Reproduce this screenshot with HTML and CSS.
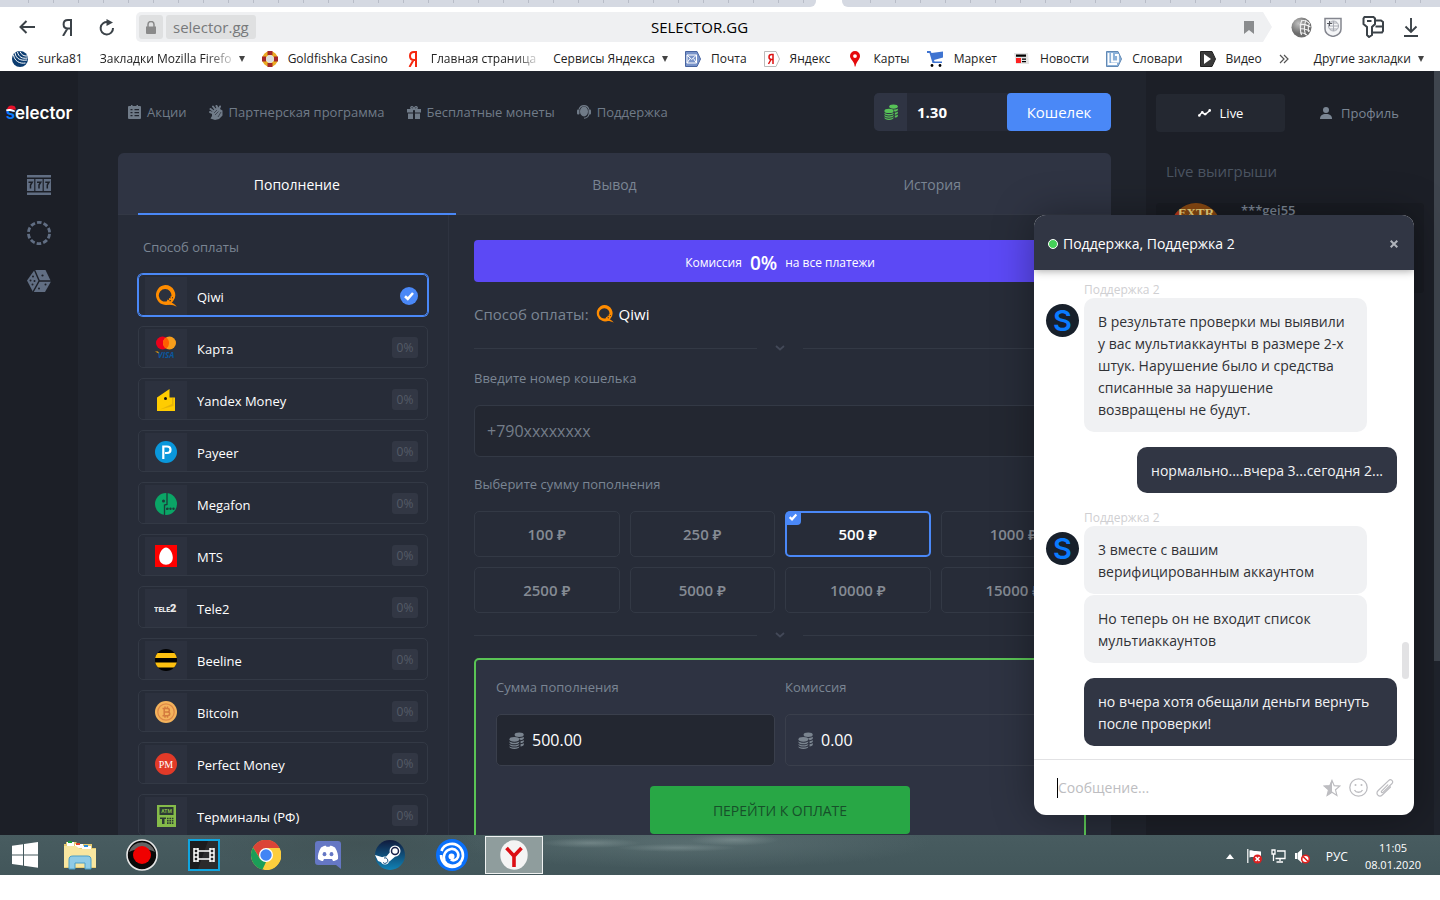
FILE: index.html
```html
<!DOCTYPE html>
<html lang="ru">
<head>
  <meta charset="utf-8">
  <title>SELECTOR.GG</title>
  <link rel="stylesheet" href="styles.css">
</head>
<body>
  <svg class="sprite" aria-hidden="true">
    <symbol id="i-coins" viewBox="0 0 14 16">
      <g fill="currentColor">
        <ellipse cx="9.5" cy="2.6" rx="4.3" ry="2.1"/>
        <path d="M10 5.6c2 0 3.300-.5 3.900-1.100v1.300c0 1-1.400 1.700-3.200 1.900-.3-.9-.7-1.400-1.500-2zM10.800 8.700c1.500-.2 2.500-.6 3.100-1.200v1.300c0 1-1.300 1.700-3.100 1.900zM10.800 11.600c1.500-.2 2.500-.6 3.100-1.200v1.300c0 1-1.300 1.700-3.100 1.900z"/>
        <ellipse cx="5" cy="6.900" rx="4.600" ry="2.200"/>
        <path d="M.4 8.700c.8.900 2.500 1.400 4.600 1.400s3.800-.5 4.600-1.400v.9c0 1.200-2 2-4.600 2s-4.600-.8-4.600-2zM.4 11.100c.8.900 2.500 1.400 4.600 1.400s3.800-.5 4.600-1.400v.6c0 1.200-2 2-4.600 2s-4.600-.8-4.600-2zM.4 13.300c.8.900 2.500 1.400 4.600 1.400s3.800-.5 4.600-1.400v.5c0 1.200-2 2.100-4.600 2.100S.4 15 .4 13.800z"/>
      </g>
    </symbol>
    <symbol id="i-qiwi" viewBox="0 0 22 22">
      <path fill="#ff8c00" fill-rule="evenodd" d="M10.200 0a10 10 0 0 1 8 16l-2 2.500a10 10 0 1 1-6-18.500zm0 4A6.300 6.300 0 1 0 12 16.300l.3-1.800 1.500.8.200-2.300 1.600.5-.2-2 1-.3A6.300 6.300 0 0 0 10.200 4z"/>
      <path fill="#ff8c00" d="M11 17.500c4-.8 8 .3 10.800 4.200-2.300-1.500-5.500-2.200-8.800-2z"/>
      <path fill="#272c38" d="M14.500 15h1.300v1.300h-1.300zM17 12.300h1v1h-1z"/>
    </symbol>
    <symbol id="i-check" viewBox="0 0 12 12">
      <path fill="none" stroke="#fff" stroke-width="2.600" d="M2 6.200l2.800 2.600L10 3"/>
    </symbol>
    <symbol id="i-down" viewBox="0 0 10 6">
      <path fill="none" stroke="currentColor" stroke-width="1.800" d="M1 1l4 3.500L9 1"/>
    </symbol>
  </svg>

  <div class="tabstrip">
    <div class="tabstrip-part tabstrip-left"></div>
    <div class="tabstrip-part tabstrip-right"></div>
  </div>

  <div class="toolbar">
    <button class="tool" aria-label="Назад"><svg width="16" height="14" viewBox="0 0 16 14"><path fill="none" stroke="#3b4248" stroke-width="2" d="M16 7H1.500M7.500 1l-6 6 6 6"/></svg></button>
    <button class="tool tool-ya" aria-label="Яндекс"><svg width="10" height="17" viewBox="0 0 10 17"><path fill="none" stroke="#3b4248" stroke-width="2" d="M9 17V1H6C3 1 1.600 2.700 1.600 5.200S3 9.500 6 9.500h3M5.500 9.500L1 17"/></svg></button>
    <button class="tool" aria-label="Обновить"><svg width="16" height="17" viewBox="0 0 16 17"><path fill="none" stroke="#3b4248" stroke-width="2" d="M9 3.200A6.200 6.200 0 1 0 14 9"/><path fill="#3b4248" d="M7.500 0l6.500 3.500-6.500 3.500z"/></svg></button>
    <div class="address">
      <div class="address-site">
        <button class="chip" aria-label="Сертификат"><svg width="10" height="13" viewBox="0 0 10 13"><path fill="#8a8a8a" d="M0 5.500h10V12a1 1 0 0 1-1 1H1a1 1 0 0 1-1-1z"/><path fill="none" stroke="#8a8a8a" stroke-width="1.500" d="M2 6V3.500a3 3 0 0 1 6 0V6"/></svg></button>
        <span class="chip chip-domain">selector.gg</span>
      </div>
      <span class="address-title">SELECTOR.GG</span>
      <button class="mark" aria-label="В закладки"><svg width="10" height="13" viewBox="0 0 10 13"><path fill="#8a8c8e" d="M0 0h10v13L5 9l-5 4z"/></svg></button>
    </div>
    <div class="extensions">
      <svg width="21" height="21" viewBox="0 0 21 21"><defs><radialGradient id="globe" cx=".35" cy=".3"><stop offset="0" stop-color="#c0c0c0"/><stop offset="1" stop-color="#6c6c6c"/></radialGradient></defs><circle cx="10.500" cy="10.500" r="10" fill="url(#globe)"/><g fill="none" stroke="#f3f3f3" stroke-width="1.100"><path d="M10 4c3-1 6 0 8 2M8.500 8c4-1.500 8 0 11 2M9 12c4-1 7 1 10 2M9 16c3-1 5 1 7 2M11 3c-2 4-2 10-.5 15M15 3c-2 5-2 10-.5 15M18.500 6c-1.500 3-1.500 7-1 9"/></g></svg>
      <svg width="18" height="20" viewBox="0 0 18 20"><path fill="#f4f5f7" stroke="#84868f" stroke-width="1.500" d="M1 1.500h16V12c0 4-4 6.500-8 7.500-4-1-8-3.500-8-7.500z"/><g fill="none" stroke="#a9acb4"><circle cx="9.500" cy="9" r="5"/><path d="M9.500 4v10M4.500 9h10M6 6h7M6 12h7"/></g><path stroke="#56585f" d="M3 6.500h5M5.500 4v5"/></svg>
      <svg width="22" height="22" viewBox="0 0 22 22"><g fill="none" stroke="#3b4248" stroke-width="2"><path d="M2.500 1h9L13 2.500V8l-3 3v8l-3 2-2-2v-8L1.500 8V2.500z"/><path d="M5 5h4.500M13.500 4.500H19L21 6v9l-1 1.500h-9M13.500 10.500H21"/></g></svg>
      <svg width="14" height="19" viewBox="0 0 14 19"><path fill="none" stroke="#3b4248" stroke-width="1.900" d="M7 0v13.500M1.500 8.500L7 14l5.500-5.500M0 18h14"/></svg>
    </div>
  </div>

  <nav class="bookmarks">
    <a href="#"><svg width="16" height="16" viewBox="0 0 16 16"><circle cx="8" cy="8" r="8" fill="#0b3c70"/><g fill="none" stroke="#fff" stroke-width="1"><path d="M3 2c1 6 6 8 12 7M5.500 1c1 5 5 7 10 6M8 .5c1 3 4 5 7.500 4.500M1.500 4c1 6 6 9 12 8"/></g></svg>surka81</a>
    <a href="#"><span class="fade">Закладки Mozilla Firefo</span><i class="caret"></i></a>
    <a href="#"><svg width="16" height="16" viewBox="0 0 16 16"><circle cx="8" cy="8" r="5.800" fill="#f5f5f5" stroke="#ecab22" stroke-width="4"/><g fill="#a3282b"><path d="M5.500 0h5v4h-5zM5.500 12h5v4h-5zM0 5.500h4v5H0zM12 5.500h4v5h-4z"/></g><circle cx="8" cy="8" r="3.800" fill="#ddd"/></svg>Goldfishka Casino</a>
    <a href="#"><svg width="16" height="16" viewBox="0 0 16 16"><path fill="none" stroke="#f5280f" stroke-width="2" d="M11 16V1H9C6.500 1 5 2.500 5 5s1.500 4 4 4h2M8.500 9L4.500 16"/></svg><span class="fade">Главная страница</span></a>
    <a href="#">Сервисы Яндекса<i class="caret"></i></a>
    <a href="#"><svg width="16" height="16" viewBox="0 0 16 16"><path fill="#7893c9" stroke="#4864a0" d="M.5.500H12L15.500 8 12 15.500H.5z"/><path fill="none" stroke="#fff" d="M2 4h9.500v8H2zM2 4l4.700 4.500L11.500 4M2 12l3-4.500M11.500 12l-3-4.500"/></svg>Почта</a>
    <a href="#"><svg width="16" height="16" viewBox="0 0 16 16"><path fill="#fff" stroke="#bbb" d="M.5.500H12L15.500 8 12 15.500H.5z"/><path fill="none" stroke="#d11" stroke-width="1.500" d="M9 13V3.500H7.500C5.800 3.500 5 4.500 5 6s.8 2.500 2.500 2.500H9M7 8.500L4.500 13"/></svg>Яндекс</a>
    <a href="#"><svg width="16" height="16" viewBox="0 0 16 16"><path fill="#e5090b" fill-rule="evenodd" d="M8 0a5 5 0 0 1 5 5c0 3.500-3.500 5-4.500 10.500h-.8C7.500 10 3 8.500 3 5a5 5 0 0 1 5-5zm0 3.200a1.900 1.900 0 1 0 0 3.800 1.900 1.900 0 0 0 0-3.800z"/></svg>Карты</a>
    <a href="#"><svg width="17" height="16" viewBox="0 0 17 16"><path fill="#3f74d1" d="M0 0h3.500L4.500 2 16 .500v6L7 9l.5 1.500H15V12H5.500L2.500 2H0z"/><circle cx="5" cy="14.500" r="1.400"/><circle cx="13" cy="14.500" r="1.400"/></svg>Маркет</a>
    <a href="#"><svg width="16" height="16" viewBox="0 0 16 16"><path fill="#e3e3e3" d="M0 2h14l1 11H2z"/><path d="M2 3.500h10v2.300H2zM8 7.500h4v1.300H8zM8 10h4v1.300H8z"/><path fill="#f22" d="M2 7h5v5H2z"/></svg>Новости</a>
    <a href="#"><svg width="16" height="16" viewBox="0 0 16 16"><path fill="#8cb1d8" stroke="#6189b5" d="M.5.500H12L15.500 8 12 15.500H.5z"/><path fill="none" stroke="#fff" stroke-width="1.800" d="M6 2v8.500h6V4H9M2.500 2v11H11"/></svg>Словари</a>
    <a href="#"><svg width="16" height="16" viewBox="0 0 16 16"><path fill="#3a3a3a" stroke="#222" d="M.5.500H12L15.500 8 12 15.500H.5z"/><path fill="#fff" d="M4 3l7 5-7 5z"/></svg>Видео</a>
    <a href="#" aria-label="Ещё"><svg width="10" height="10" viewBox="0 0 10 10"><path fill="none" stroke="#555" stroke-width="1.200" d="M1 1l4 4-4 4M5 1l4 4-4 4"/></svg></a>
    <a href="#" class="other">Другие закладки<i class="caret"></i></a>
  </nav>

  <div class="app">
    <aside class="sidebar">
      <a href="#" class="logo"><span class="logo-s">s</span>elector<svg class="hat" width="10" height="7" viewBox="0 0 10 7"><path fill="#e8112a" d="M1 5C1 1 5-1 9 1.500l1 3z"/><path fill="#fff" d="M0 4.500c3-1 6-.5 9 1.200l-.5 1.200C5.500 6 3 5.600.500 6.200z"/></svg></a>
      <a href="#" class="side-link" aria-label="Слоты"><svg width="24" height="20" viewBox="0 0 24 20"><path fill="#616e83" d="M0 0h24v2.500H0zM0 17.500h24V20H0zM0 4h7.200v12H0zM8.400 4h7.200v12H8.400zM16.800 4H24v12h-7.200z"/><path fill="none" stroke="#1c1f27" stroke-width="1.500" d="M1.500 7.200h3.700L3.500 10v3.500M10 7.200h3.700L12 10v3.500M18.300 7.200H22L20.300 10v3.500"/></svg></a>
      <a href="#" class="side-link" aria-label="Рулетка"><svg width="24" height="24" viewBox="0 0 24 24"><circle cx="12" cy="12" r="10.600" fill="none" stroke="#616e83" stroke-width="2.800" stroke-dasharray="4.600 2.060" stroke-dashoffset="-1"/></svg></a>
      <a href="#" class="side-link" aria-label="Кости"><svg width="24" height="22" viewBox="0 0 24 22"><path fill="#616e83" d="M7.500 0L0 10.500 6 22h12l6-10.500L18.500 0z"/><path fill="none" stroke="#1c1f27" stroke-width="1.400" d="M7.500 0l4.700 10.800L24 11M12.200 10.800L6 22"/><g fill="#1c1f27"><circle cx="15.500" cy="5.500" r="1.100"/><circle cx="6" cy="6.500" r="1"/><circle cx="3.500" cy="10.500" r="1"/><circle cx="7.500" cy="11" r="1"/><circle cx="5.500" cy="14.500" r="1"/><circle cx="18.500" cy="14.500" r="1"/><circle cx="12" cy="18.500" r="1"/></g></svg></a>
    </aside>

    <main class="main">
      <header class="header">
        <nav class="menu">
          <a href="#"><svg width="13" height="14" viewBox="0 0 13 14"><path fill="currentColor" fill-rule="evenodd" d="M1 1h2V0h1.500v1h4V0H10v1h2a1 1 0 0 1 1 1v11a1 1 0 0 1-1 1H1a1 1 0 0 1-1-1V2a1 1 0 0 1 1-1zm1.500 3v1.300h2V4zm4 0v1.300H11V4zm-4 3v1.300h2V7zm4 0v1.300H11V7zm-4 3v1.300h2V10zm4 0v1.300H11V10z"/></svg>Акции</a>
          <a href="#"><svg width="14" height="15" viewBox="0 0 14 15"><g fill="none" stroke="currentColor" stroke-linecap="round"><path stroke-width="2" d="M1 7l2.500 1M1.500 4L5 6.500M4 1.500L7 5.500M7.500 1L9 4M11 1.500L10 4"/></g><path fill="currentColor" d="M3 7l4-4 4 1 2.500 1.500v5L10 14l-4 1-4.500-1.500L3 11z"/><path fill="none" stroke="#20242d" stroke-width=".6" d="M5 8l3-3M6 10l3.500-3.500M9 12l3-5"/></svg>Партнерская программа</a>
          <a href="#"><svg width="14" height="13" viewBox="0 0 14 13"><path fill="currentColor" d="M0 3h6v3.500H0zM8 3h6v3.500H8zM1 7.500h5V13H1zM8 7.500h5V13H8z"/><path fill="none" stroke="currentColor" stroke-width="1.300" d="M7 3.500C5 3 3 2.500 4 1.200S7 1 7 3.500c0-2.500 2-3.600 3-2.300S9 3 7 3.500z"/></svg>Бесплатные монеты</a>
          <a href="#"><svg width="14" height="14" viewBox="0 0 14 14"><ellipse cx="7" cy="6.500" rx="4" ry="5" fill="currentColor"/><path fill="none" stroke="currentColor" stroke-width="1.100" d="M2 4.500C3 1 5 .6 7 .6s4 .6 5 4M12 9c-.5 3-2 4-5 4.300"/><rect y="4.500" width="2.500" height="5" rx="1" fill="currentColor"/><rect x="11.500" y="4.500" width="2.500" height="5" rx="1" fill="currentColor"/></svg>Поддержка</a>
        </nav>
        <div class="wallet">
          <span class="wallet-icon"><svg width="14" height="16"><use href="#i-coins"/></svg></span>
          <span class="wallet-sum">1.30</span>
          <button class="wallet-btn">Кошелек</button>
        </div>
      </header>

      <section class="card">
        <div class="tabs">
          <button class="tab active">Пополнение</button>
          <button class="tab">Вывод</button>
          <button class="tab">История</button>
        </div>
        <div class="card-body">
          <div class="methods">
            <h2 class="methods-title">Способ оплаты</h2>
            <button class="method selected"><span class="method-icon"><svg width="22" height="22"><use href="#i-qiwi"/></svg></span><span class="method-name">Qiwi</span><span class="tick"><svg width="12" height="12"><use href="#i-check"/></svg></span></button>
            <button class="method"><span class="method-icon"><svg width="26" height="24" viewBox="0 0 26 24"><circle cx="9.500" cy="7" r="6.500" fill="#eb001b"/><circle cx="16.500" cy="7" r="6.500" fill="#f79e1b"/><path fill="#ff5f00" d="M13 1.500a6.500 6.500 0 0 1 0 11 6.500 6.500 0 0 1 0-11z"/><text class="visa" x="13" y="22">VISA</text><path fill="#f7a600" d="M2 15.500h3l1 2z"/></svg></span><span class="method-name">Карта</span><span class="badge">0%</span></button>
            <button class="method"><span class="method-icon"><svg width="18" height="22" viewBox="0 0 18 22"><path fill="#ffcc01" d="M0 22V8.500L12.500 0v8.500H18V22z"/><path fill="#dba80c" d="M3 20.500l12-5.500V9l1.500 0v8z" opacity=".7"/><circle cx="8.500" cy="9.500" r="1.500" fill="#111"/></svg></span><span class="method-name">Yandex Money</span><span class="badge">0%</span></button>
            <button class="method"><span class="method-icon"><svg width="22" height="22" viewBox="0 0 22 22"><circle cx="11" cy="11" r="11" fill="#0a97db"/><path fill="none" stroke="#fff" stroke-width="2.200" d="M8.300 18V5.500h3.700c2.300 0 3.500 1.200 3.500 3.200s-1.200 3.300-3.500 3.300h-2"/></svg></span><span class="method-name">Payeer</span><span class="badge">0%</span></button>
            <button class="method"><span class="method-icon"><svg width="22" height="22" viewBox="0 0 22 22"><circle cx="11" cy="11" r="11" fill="#0aa566"/><path fill="none" stroke="#1c3c3a" stroke-width="1.300" d="M12 0v11.500L9.500 12v10M11 16h1"/><g fill="#1c3c3a"><circle cx="8.500" cy="8" r="1.500"/><circle cx="12.500" cy="15.800" r="1.200"/><circle cx="15.500" cy="15.800" r="1.200"/><circle cx="18.500" cy="15.800" r="1.200"/></g></svg></span><span class="method-name">Megafon</span><span class="badge">0%</span></button>
            <button class="method"><span class="method-icon"><svg width="22" height="22" viewBox="0 0 22 22"><path fill="#f00" d="M0 0h22v22H0z"/><path fill="#fff" d="M11 2.500c3.500 0 6.800 5.500 6.800 10 0 4.500-2.800 7.200-6.800 7.200s-6.800-2.700-6.800-7.200c0-4.500 3.300-10 6.800-10z"/></svg></span><span class="method-name">MTS</span><span class="badge">0%</span></button>
            <button class="method"><span class="method-icon"><svg width="24" height="12" viewBox="0 0 24 12"><text class="tele" x="0" y="10">TELE<tspan class="tele-two">2</tspan></text></svg></span><span class="method-name">Tele2</span><span class="badge">0%</span></button>
            <button class="method"><span class="method-icon"><svg width="22" height="22" viewBox="0 0 22 22"><defs><clipPath id="ball"><circle cx="11" cy="11" r="11"/></clipPath></defs><g clip-path="url(#ball)"><path d="M0 0h22v22H0z"/><path fill="#fdc010" d="M0 4h22v5H0zM0 13.500h22v5H0z"/></g></svg></span><span class="method-name">Beeline</span><span class="badge">0%</span></button>
            <button class="method"><span class="method-icon"><svg width="22" height="22" viewBox="0 0 22 22"><circle cx="11" cy="11" r="11" fill="#f4b35c"/><circle cx="11" cy="11" r="8.200" fill="none" stroke="#dd8848" stroke-width="1.200"/><path fill="none" stroke="#d37a3e" stroke-width="1.500" d="M7.500 7.500h5c2.500 0 2.500 3.400 0 3.400H9m3.500 0c3 0 3 3.800 0 3.800h-5M9.200 7.500v7M10 5.500v2M12.500 5.500v2M10 15v1.800M12.500 15v1.800"/></svg></span><span class="method-name">Bitcoin</span><span class="badge">0%</span></button>
            <button class="method"><span class="method-icon"><svg width="22" height="22" viewBox="0 0 22 22"><circle cx="11" cy="11" r="11" fill="#e23a28"/><text class="pm" x="11" y="15">PM</text></svg></span><span class="method-name">Perfect Money</span><span class="badge">0%</span></button>
            <button class="method"><span class="method-icon"><svg width="19" height="22" viewBox="0 0 19 22"><path fill="#85bb49" d="M0 0h19v22H0z"/><path fill="#2c3a35" d="M2.500 2h14v8h-14zM3 12.500h6V14H7.500v5H5v-5H3z"/><text class="atm" x="9.500" y="8">ATM</text><path stroke="#2c3a35" stroke-width="1.600" stroke-dasharray="1.600 .8" d="M10 13.500h6.500M10 15.800h6.500M10 18.100h6.500"/></svg></span><span class="method-name">Терминалы (РФ)</span><span class="badge">0%</span></button>
          </div>

          <form class="pay">
            <div class="banner">Комиссия <b>0%</b> на все платежи</div>
            <p class="pay-method">Способ оплаты: <svg width="18" height="18"><use href="#i-qiwi"/></svg><span>Qiwi</span></p>
            <div class="divider"><svg width="10" height="6"><use href="#i-down"/></svg></div>
            <label class="label" for="purse">Введите номер кошелька</label>
            <input class="purse" id="purse" type="text" placeholder="+790xxxxxxxx">
            <p class="label">Выберите сумму пополнения</p>
            <div class="amounts">
              <button type="button" class="amount">100 ₽</button>
              <button type="button" class="amount">250 ₽</button>
              <button type="button" class="amount selected">500 ₽<span class="corner"><svg width="10" height="10"><use href="#i-check"/></svg></span></button>
              <button type="button" class="amount">1000 ₽</button>
              <button type="button" class="amount">2500 ₽</button>
              <button type="button" class="amount">5000 ₽</button>
              <button type="button" class="amount">10000 ₽</button>
              <button type="button" class="amount">15000 ₽</button>
            </div>
            <div class="divider"><svg width="10" height="6"><use href="#i-down"/></svg></div>
            <div class="total">
              <div class="total-fields">
                <div class="total-field">
                  <label class="label" for="sum">Сумма пополнения</label>
                  <div class="money money-dark"><svg width="15" height="17"><use href="#i-coins"/></svg><input id="sum" type="text" value="500.00"></div>
                </div>
                <div class="total-field">
                  <label class="label" for="fee">Комиссия</label>
                  <div class="money"><svg width="15" height="17"><use href="#i-coins"/></svg><input id="fee" type="text" value="0.00"></div>
                </div>
              </div>
              <button type="button" class="submit">ПЕРЕЙТИ К ОПЛАТЕ</button>
            </div>
          </form>
        </div>
      </section>
    </main>

    <aside class="live">
      <div class="live-tabs">
        <button class="live-tab active"><svg width="13" height="8" viewBox="0 0 13 8"><path fill="none" stroke="#fff" stroke-width="1.500" d="M1 6.500l3-3 3 2 5-4"/><g fill="#fff"><circle cx="1.300" cy="6.500" r="1.300"/><circle cx="4.300" cy="3.300" r="1.300"/><circle cx="7.300" cy="5" r="1.300"/><circle cx="11.700" cy="1.400" r="1.300"/></g></svg>Live</button>
        <button class="live-tab"><svg width="12" height="12" viewBox="0 0 12 12"><circle cx="6" cy="3" r="3" fill="currentColor"/><path fill="currentColor" d="M0 12c0-3.500 2-5 6-5s6 1.500 6 5z"/></svg>Профиль</button>
      </div>
      <h2 class="live-title">Live выигрыши</h2>
      <div class="win">
        <svg class="win-pic" width="50" height="50" viewBox="0 0 50 50"><defs><clipPath id="round"><circle cx="25" cy="25" r="25"/></clipPath></defs><g clip-path="url(#round)"><path fill="#8a4a12" d="M0 0h50v50H0z"/><path fill="#c03a1c" d="M0 7l10 2v8H0z"/><text class="win-art" x="25" y="14">EXTR</text></g></svg>
        <b class="win-name">***gei55</b>
      </div>
    </aside>
    <div class="page-scroll"><div class="page-thumb"></div></div>

    <section class="chat">
      <header class="chat-head"><i class="online"></i><span>Поддержка, Поддержка 2</span><button class="close" aria-label="Закрыть"><svg width="8" height="8" viewBox="0 0 8 8"><path stroke="#b0b4bb" stroke-width="2" d="M.7.700l6.600 6.600M7.300.700L.7 7.300"/></svg></button></header>
      <div class="chat-log">
        <div class="group">
          <span class="avatar">S</span>
          <div class="bubbles">
            <span class="author">Поддержка 2</span>
            <p class="bubble">В результате проверки мы выявили<br>у вас мультиаккаунты в размере 2-х<br>штук. Нарушение было и средства<br>списанные за нарушение<br>возвращены не будут.</p>
          </div>
        </div>
        <p class="bubble mine">нормально....вчера 3...сегодня 2...</p>
        <div class="group group-next">
          <span class="avatar">S</span>
          <div class="bubbles">
            <span class="author">Поддержка 2</span>
            <p class="bubble">3 вместе с вашим<br>верифицированным аккаунтом</p>
            <p class="bubble">Но теперь он не входит список<br>мультиаккаунтов</p>
          </div>
        </div>
        <p class="bubble mine">но вчера хотя обещали деньги вернуть после проверки!</p>
        <div class="chat-thumb"></div>
      </div>
      <footer class="chat-foot">
        <i class="cursor"></i>
        <input type="text" placeholder="Сообщение..." aria-label="Сообщение">
        <button aria-label="Оценить"><svg width="18" height="18" viewBox="0 0 18 18"><path fill="none" stroke="#bdbdc1" stroke-width="1.200" d="M9 1.500l2.200 5.200 5.600.4-4.300 3.700 1.400 5.600L9 13.300l-4.900 3.100 1.400-5.600L1.200 7.100l5.600-.4z"/><path fill="#bdbdc1" d="M9 .5v13L4 17l1.500-6L.5 7l6-.5z"/></svg></button>
        <button aria-label="Смайлы"><svg width="19" height="19" viewBox="0 0 19 19"><g fill="none" stroke="#bdbdc1" stroke-width="1.300"><circle cx="9.500" cy="9.500" r="8.700"/><path d="M5.500 12c1.500 3 6.500 3 8 0"/></g><circle cx="6.500" cy="7" r="1" fill="#bdbdc1"/><circle cx="12.500" cy="7" r="1" fill="#bdbdc1"/></svg></button>
        <button aria-label="Прикрепить файл"><svg width="18" height="18" viewBox="0 0 18 18"><path fill="none" stroke="#bdbdc1" stroke-width="1.200" stroke-linecap="round" d="M11.800 5.800l-6 6c-1.200 1.200.2 2.600 1.400 1.400l8.600-8.400c2.300-2.400-.9-5.500-3.200-3.200L2 11.800c-3 3 1.200 7 4.200 4.200L14.500 8"/></svg></button>
      </footer>
    </section>
  </div>

  <footer class="taskbar">
    <button class="task start" aria-label="Пуск"><svg width="26" height="26" viewBox="0 0 26 26"><path fill="#fff" d="M0 3.700l11-1.500v10.200H0zM12 2l14-2v12.400H12zM0 13.400h11v10.200L0 22.100zM12 13.400h14v12.400L12 23.800z"/></svg></button>
    <button class="task" aria-label="Проводник"><svg width="32" height="30" viewBox="0 0 32 30"><path fill="#e8cd72" d="M2 2h10l2 2h14v4h4v20H0V4h2z"/><path fill="#fff" d="M3 2h7v4H3zM11 4h8v4h-8zM18 6h9v4h-9z"/><path fill="#1a9f3a" d="M4 1h4v2H4z"/><path fill="#e0432a" d="M12 3h4v2h-4z"/><path fill="#2a8fdc" d="M20 5h4v2h-4z"/><path fill="#f8e6a0" d="M0 6h12l4 3h16v18H0z"/><path fill="#8fcbe6" stroke="#4b9fc8" d="M5 29V20c0-3 1-4 4-4h14c3 0 4 1 4 4v9h-6v-6H11v6z"/></svg></button>
    <button class="task" aria-label="Запись"><svg width="32" height="32" viewBox="0 0 32 32"><circle cx="16" cy="16" r="15" fill="#090909" stroke="#e6e6e6" stroke-width="1.600"/><path fill="#8c8c8c" d="M3 13a13.500 13.500 0 0 1 26 0C22 9 10 9 3 13z" opacity=".7"/><circle cx="16" cy="16" r="9" fill="#f00000"/></svg></button>
    <button class="task" aria-label="Видеоредактор"><svg width="32" height="32" viewBox="0 0 32 32"><path fill="#1c1c1e" stroke="#0fa5e0" stroke-width="2" d="M1 1h30v30H1z"/><path fill="#3a3a3c" d="M20 2h10v28H10z" opacity=".5"/><path fill="none" stroke="#fff" stroke-width="1.500" d="M6 9v14M10 9v14M22 9v14M26 9v14M10 12h12M10 20h12"/><path stroke="#fff" stroke-width="1.500" d="M6 10h4M6 14h4M6 18h4M6 22h4M22 10h4M22 14h4M22 18h4M22 22h4"/></svg></button>
    <button class="task" aria-label="Chrome"><svg width="30" height="30" viewBox="0 0 30 30"><circle cx="15" cy="15" r="15" fill="#fccd3d"/><path fill="#db4437" d="M2 7.500a15 15 0 0 1 26.500.5H15L9 18.500z"/><path fill="#1b9d58" d="M2 7.500L9 18.700 15 22l-3.500 7.600A15 15 0 0 1 2 7.500z"/><path fill="#fccd3d" d="M28.500 8A15 15 0 0 1 13 29.900L21.500 18 19 8z"/><circle cx="15" cy="15" r="7" fill="#fff"/><circle cx="15" cy="15" r="5.700" fill="#4285f4"/></svg></button>
    <button class="task" aria-label="Discord"><svg width="26" height="28" viewBox="0 0 26 28"><path fill="#6577c4" d="M3 0h20a3 3 0 0 1 3 3v25l-5-4H3a3 3 0 0 1-3-3V3a3 3 0 0 1 3-3z"/><path fill="#fff" d="M6 6.500c2-1.500 4-1.800 5-1.800l.4 1h3.200l.4-1c1 0 3 .3 5 1.800 2.500 4 3.500 8 3 11.500-2 1.500-3.500 2-5 2l-1-2H9l-1 2c-1.500 0-3-.5-5-2-.5-3.500.5-7.500 3-11.500z"/><ellipse cx="9.500" cy="13.200" rx="1.900" ry="2.100" fill="#6577c4"/><ellipse cx="16.500" cy="13.200" rx="1.900" ry="2.100" fill="#6577c4"/></svg></button>
    <button class="task" aria-label="Steam"><svg width="30" height="30" viewBox="0 0 30 30"><defs><linearGradient id="steam" x2="0" y2="1"><stop offset="0" stop-color="#101a3c"/><stop offset="1" stop-color="#1083b6"/></linearGradient></defs><circle cx="15" cy="15" r="15" fill="url(#steam)"/><path fill="#fff" d="M0 15l10 3 6-7 6 4-7 6-4 3-8-3z"/><circle cx="20" cy="11" r="5.500" fill="#fff"/><circle cx="20" cy="11" r="3.500" fill="none" stroke="#18214a" stroke-width="1.500"/><circle cx="10" cy="20.500" r="4" fill="#fff"/><path fill="none" stroke="#17507f" d="M8 22.500a2.800 2.800 0 1 0 1-4.500"/></svg></button>
    <button class="task" aria-label="Uplay"><svg width="32" height="32" viewBox="0 0 32 32"><circle cx="16" cy="16" r="16" fill="#0a70fa"/><g fill="none" stroke="#fff" stroke-width="2.600"><path d="M5.500 12C8 4.500 19 2 24.500 9c4 5.500 3 12-1.500 15.500-5 4-12 2.500-14.500-2.500C6.500 17 9 11 15 10c5-.7 8.500 4 7 8-1.200 3.200-5 4.200-7.200 2.500"/><path d="M5 16c0 7 5 12 11 12 4 0 7-1.500 9-4"/></g><circle cx="15.500" cy="17.500" r="3" fill="#fff"/></svg></button>
    <button class="task current" aria-label="Яндекс.Браузер"><svg width="28" height="30" viewBox="0 0 28 30"><ellipse cx="14" cy="15" rx="13.700" ry="14.700" fill="#f4f4f4"/><path fill="none" stroke="#dc0e14" stroke-width="3.600" d="M6.500 8L14 16l7.500-8M14 15v12"/></svg></button>
    <div class="tray">
      <svg width="8" height="5" viewBox="0 0 8 5"><path fill="#fff" d="M4 0l4 5H0z"/></svg>
      <svg width="15" height="15" viewBox="0 0 15 15"><path stroke="#fff" stroke-width="1.200" d="M.8 0v14"/><path fill="#fff" d="M2.500 1.500c3-1 4 1 6.500.5l5 .5v6c-4 1-7-1.500-11.500 0z"/><circle cx="10.500" cy="10" r="4.500" fill="#dd1f1f"/><path stroke="#fff" stroke-width="1.600" d="M8.500 8l4 4M12.500 8l-4 4"/></svg>
      <svg width="15" height="14" viewBox="0 0 15 14"><path fill="none" stroke="#fff" stroke-width="1.300" d="M6 2h8v7.500H4.500M9 9.500V12M5.500 13H12M1 1h3v4H1zM2.500 5v7"/></svg>
      <svg width="15" height="15" viewBox="0 0 15 15"><path fill="#fff" d="M0 4h2v6H0zM2.500 4L7 0v14l-4.500-4z"/><circle cx="10.500" cy="10" r="3.800" fill="#fff" stroke="#e0201e" stroke-width="1.600"/><path stroke="#e0201e" stroke-width="1.600" d="M8 7.500l5 5"/></svg>
      <span class="lang">РУС</span>
      <div class="clock">11:05<br>08.01.2020</div>
    </div>
  </footer>
</body>
</html>
```
FILE: styles.css
```css
* {
  box-sizing: border-box;
}
body {
  margin: 0;
  height: 100vh;
  padding-bottom: 25px;
  display: flex;
  flex-direction: column;
  overflow: hidden;
  background: #fff;
  font-family: "Open Sans", "Noto Sans", sans-serif;
  font-size: 14px;
  line-height: 20px;
}
button, input {
  font: inherit;
  color: inherit;
  background: none;
  border: none;
  padding: 0;
  outline: none;
}
button {
  cursor: pointer;
}
a {
  color: inherit;
  text-decoration: none;
}
p, h2 {
  margin: 0;
  font-size: inherit;
  font-weight: normal;
}
svg {
  display: block;
  flex: none;
}
.sprite {
  position: absolute;
  width: 0;
  height: 0;
}

/* browser */
.tabstrip {
  display: flex;
  justify-content: space-between;
  height: 7px;
  flex: none;
}
.tabstrip-part {
  background: repeating-linear-gradient(90deg, transparent 0 24px, #b9bdc8 24px 25px) 4px 0 / 100% 3px no-repeat #d5d9e2;
}
.tabstrip-left {
  width: 56.7%;
  border-bottom-right-radius: 6px;
}
.tabstrip-right {
  width: 41.5%;
  border-bottom-left-radius: 6px;
}
.toolbar {
  display: flex;
  align-items: center;
  height: 40px;
  flex: none;
  padding: 0 22px 0 7px;
}
.tool {
  width: 40px;
  display: flex;
  justify-content: center;
}
.address {
  flex: 1;
  display: grid;
  grid-template-columns: 1fr auto 1fr;
  align-items: center;
  height: 30px;
  margin-left: 9px;
  padding: 0 12px 0 3px;
  border-radius: 5px;
  background: #eff0f2;
  clip-path: polygon(0 0, calc(100% - 9px) 0, 100% 50%, calc(100% - 9px) 100%, 0 100%);
}
.address-site {
  display: flex;
  gap: 3px;
}
.chip {
  display: flex;
  align-items: center;
  justify-content: center;
  height: 24px;
  padding: 0 7px;
  border-radius: 3px;
  background: #dfe0e1;
}
.chip-domain {
  color: #77797b;
  font-size: 15px;
}
.address-title {
  font-size: 15px;
  color: #000;
}
.mark {
  justify-self: end;
  margin-right: 6px;
}
.extensions {
  display: flex;
  align-items: center;
  gap: 20px;
  margin-left: 19px;
}
.extensions svg:first-child {
  margin-right: -8px;
}
.bookmarks {
  display: flex;
  align-items: center;
  justify-content: space-between;
  height: 24px;
  flex: none;
  padding: 0 16px 0 12px;
  font-size: 12px;
  color: #222;
  white-space: nowrap;
}
.bookmarks a {
  display: flex;
  align-items: center;
  gap: 10px;
}
.fade {
  -webkit-mask-image: linear-gradient(90deg, #000 80%, rgba(0, 0, 0, 0.2));
  mask-image: linear-gradient(90deg, #000 80%, rgba(0, 0, 0, 0.2));
}
.caret {
  margin-left: -3px;
  border: 3px solid transparent;
  border-top: 6px solid #444;
  border-bottom: 0;
}
.other {
  margin-left: 8px;
}

/* site */
.app {
  position: relative;
  flex: 1;
  min-height: 0;
  display: grid;
  grid-template-columns: 78px 1fr 288px 6px;
  overflow: hidden;
  background: #20242d;
  color: #7a8593;
}
.sidebar {
  display: flex;
  flex-direction: column;
  align-items: center;
  background: #1c1f27;
}
.logo {
  position: relative;
  margin: 32px 0 51px;
  font: 600 17px/20px Inter, sans-serif;
  color: #fff;
}
.logo-s {
  color: #0a7bff;
}
.hat {
  position: absolute;
  left: 0;
  top: 2px;
}
.side-link {
  display: flex;
  align-items: center;
  height: 22px;
  margin-bottom: 26px;
}
.main {
  padding: 0 35px 0 40px;
}
.header {
  display: flex;
  align-items: center;
  justify-content: space-between;
  height: 82px;
}
.menu {
  display: flex;
  gap: 22px;
  padding-left: 10px;
  color: #707b88;
  font-size: 13px;
}
.menu a {
  display: flex;
  align-items: center;
  gap: 6px;
}
.wallet {
  display: flex;
  height: 38px;
  border-radius: 5px;
  overflow: hidden;
  background: #262a36;
}
.wallet-icon {
  display: flex;
  align-items: center;
  justify-content: center;
  width: 33px;
  background: #2f3443;
  color: #57c257;
}
.wallet-sum {
  width: 100px;
  padding-left: 10px;
  font-size: 15px;
  font-weight: bold;
  line-height: 38px;
  color: #fff;
}
.wallet-btn {
  width: 104px;
  border-radius: 4px;
  background: #4a88f7;
  color: #fff;
  font-size: 15px;
  font-weight: 500;
}
.card {
  border-radius: 6px 6px 0 0;
  overflow: hidden;
  background: #272c38;
}
.tabs {
  display: flex;
  height: 62px;
  padding: 0 20px;
  border-bottom: 1px solid #333845;
  background: #2f3443;
}
.tab {
  flex: 1;
  height: 62px;
  padding-top: 4px;
  border-bottom: 2px solid transparent;
}
.tab.active {
  border-color: #4a88f7;
  color: #fff;
}
.card-body {
  display: flex;
}
.methods {
  flex: none;
  display: flex;
  flex-direction: column;
  gap: 10px;
  width: 331px;
  padding: 22px 20px;
  border-right: 1px solid #2e3340;
}
.methods-title {
  margin-bottom: 7px;
  padding-left: 5px;
  font-size: 13px;
}
.method {
  display: flex;
  align-items: center;
  height: 42px;
  padding: 1px 9px 0 6px;
  border: 1px solid #333945;
  border-radius: 5px;
  text-align: left;
}
.method.selected {
  border-color: #4a88f7;
  box-shadow: 0 0 0 1px #4a88f7;
}
.method-icon {
  display: flex;
  align-items: center;
  justify-content: center;
  width: 42px;
  height: 38px;
  background: #2c313e;
}
.method-name {
  flex: 1;
  padding: 2px 0 0 10px;
  font-size: 13px;
  color: #fff;
}
.badge {
  width: 26px;
  border-radius: 3px;
  background: #323744;
  color: #545b67;
  font-size: 12px;
  line-height: 21px;
  text-align: center;
}
.tick {
  display: flex;
  align-items: center;
  justify-content: center;
  width: 18px;
  height: 18px;
  border-radius: 50%;
  background: #4a88f7;
}
.visa {
  font: italic bold 8px "Open Sans", sans-serif;
  fill: #0a579f;
  text-anchor: middle;
}
.tele {
  font: 900 7px Roboto, sans-serif;
  fill: #e8e8e8;
}
.tele-two {
  font-size: 11px;
}
.pm {
  font: 10px "Liberation Serif", serif;
  fill: #fff;
  text-anchor: middle;
}
.atm {
  font: bold 5px Roboto, sans-serif;
  fill: #85bb49;
  text-anchor: middle;
}
.pay {
  flex: 1;
  padding: 25px;
}
.banner {
  display: flex;
  align-items: center;
  justify-content: center;
  gap: 8px;
  height: 42px;
  padding-top: 3px;
  border-radius: 4px;
  background: #5c49f5;
  color: #fff;
  font-size: 12px;
  font-weight: 500;
}
.banner b {
  font-size: 19px;
  font-weight: 600;
}
.pay-method {
  display: flex;
  align-items: center;
  gap: 7px;
  margin: 22px 0;
  font-size: 15px;
}
.pay-method svg {
  margin-right: -2px;
}
.pay-method span {
  color: #fff;
}
.divider {
  display: flex;
  align-items: center;
  gap: 18px;
  height: 4px;
  color: #434958;
}
.divider::before, .divider::after {
  content: "";
  flex: 1;
  height: 1px;
  background: #333945;
}
.label {
  display: block;
  font-size: 13px;
}
.divider + .label {
  margin-top: 18px;
}
.purse {
  display: block;
  width: 100%;
  height: 52px;
  margin: 17px 0;
  padding: 0 12px;
  border: 1px solid #333945;
  border-radius: 6px;
  background: #232731;
  font-size: 16px;
}
.purse::placeholder {
  color: #747d89;
}
.amounts {
  display: grid;
  grid-template-columns: repeat(4, 1fr);
  gap: 10px;
  margin: 17px 0 20px;
}
.amount {
  position: relative;
  height: 46px;
  border: 1px solid #333945;
  border-radius: 5px;
  color: #858b94;
  font-size: 15px;
  font-weight: 600;
}
.amount.selected {
  border: 2px solid #4a88f7;
  color: #fff;
}
.corner {
  position: absolute;
  left: -1px;
  top: -1px;
  padding: 0 3px 3px 2px;
  border-radius: 2px 0 4px 0;
  background: #4a88f7;
}
.total {
  margin-top: 21px;
  padding: 17px 20px 20px;
  border: 2px solid #5ac455;
  border-radius: 5px;
  background: #2e3342;
}
.total-fields {
  display: grid;
  grid-template-columns: 1fr 1fr;
  gap: 10px;
}
.money {
  display: flex;
  align-items: center;
  gap: 8px;
  height: 52px;
  margin-top: 17px;
  padding: 0 12px;
  border: 1px solid #3a3f4c;
  border-radius: 5px;
  color: #7a848f;
}
.money-dark {
  background: #232731;
}
.money input {
  flex: 1;
  min-width: 0;
  color: #fff;
  font-size: 16px;
}
.submit {
  display: block;
  width: 260px;
  height: 48px;
  margin: 20px auto 0;
  padding-top: 2px;
  border-radius: 4px;
  background: #28a745;
  color: #17502a;
}
.live {
  padding: 23px 10px 0;
  background: #1c1f27;
}
.live-tabs {
  display: grid;
  grid-template-columns: 1fr 1fr;
  gap: 10px;
}
.live-tab {
  display: flex;
  align-items: center;
  justify-content: center;
  gap: 9px;
  height: 38px;
  border-radius: 4px;
  font-size: 13px;
}
.live-tab.active {
  background: #242831;
  color: #fff;
  font-weight: 500;
}
.live-title {
  margin: 29px 10px 22px;
  color: #4b5461;
  font-size: 15px;
}
.win {
  display: flex;
  gap: 20px;
  height: 90px;
  padding: 0 15px;
  border-radius: 4px;
  background: #191c23;
}
.win-name {
  margin-top: -3px;
  font-size: 13px;
  font-weight: 600;
}
.win-art {
  font: bold 13px "Liberation Serif", serif;
  fill: #f3dc86;
  text-anchor: middle;
}
.page-scroll {
  background: #20242d;
}
.page-thumb {
  height: 590px;
  background: #3f454e;
}

/* chat window */
.chat {
  position: absolute;
  right: 26px;
  bottom: 20px;
  display: flex;
  flex-direction: column;
  width: 380px;
  height: 600px;
  border-radius: 12px;
  overflow: hidden;
  background: #fff;
  box-shadow: 0 0 40px rgba(0, 0, 0, 0.35);
  line-height: 22px;
}
.chat-head {
  position: relative;
  display: flex;
  align-items: center;
  gap: 5px;
  height: 55px;
  flex: none;
  padding: 2px 16px 0 14px;
  background: #313644;
  box-shadow: 0 1px 8px rgba(0, 0, 0, 0.35);
  color: #fff;
  font-weight: 500;
}
.online {
  width: 10px;
  height: 10px;
  border: 1px solid #fff;
  border-radius: 50%;
  background: #44d058;
}
.close {
  margin-left: auto;
}
.chat-log {
  position: relative;
  flex: 1;
  display: flex;
  flex-direction: column;
  justify-content: flex-end;
  padding: 0 17px 13px 12px;
}
.group {
  display: flex;
  align-items: flex-start;
  gap: 5px;
}
.group-next {
  margin-top: 17px;
}
.avatar {
  width: 33px;
  height: 33px;
  margin-top: 22px;
  border-radius: 50%;
  background: #18202b;
  color: #0a7bff;
  font: 600 29px/33px Inter, sans-serif;
  text-align: center;
}
.bubbles {
  display: flex;
  flex-direction: column;
  gap: 1px;
  width: 283px;
}
.author {
  margin-bottom: -1px;
  color: #cfcfd2;
  font-size: 12px;
  line-height: 16px;
}
.bubble {
  padding: 13px 14px 11px;
  border-radius: 10px;
  background: #f0f1f3;
  color: #303236;
}
.bubble.mine {
  align-self: flex-end;
  max-width: 313px;
  margin-top: 15px;
  background: #313644;
  color: #f2f3f5;
  font-weight: 500;
}
.chat-thumb {
  position: absolute;
  right: 5px;
  bottom: 80px;
  width: 7px;
  height: 37px;
  border-radius: 4px;
  background: #e2e2e4;
}
.chat-foot {
  display: flex;
  align-items: center;
  gap: 8px;
  height: 56px;
  flex: none;
  padding: 0 20px 0 23px;
  border-top: 1px solid #e2e2e4;
}
.chat-foot input {
  flex: 1;
  min-width: 0;
}
.chat-foot input::placeholder {
  color: #bdbdc1;
}
.cursor {
  width: 1px;
  height: 20px;
  margin-right: -8px;
  background: #000;
}

/* taskbar */
.taskbar {
  display: flex;
  align-items: center;
  height: 40px;
  flex: none;
  background:
    radial-gradient(50px 5px at 41% 20%, rgba(150, 168, 168, 0.45), transparent),
    radial-gradient(60px 4px at 47% 32%, rgba(150, 168, 168, 0.4), transparent),
    radial-gradient(45px 6px at 51% 12%, rgba(150, 168, 168, 0.45), transparent),
    radial-gradient(240px 26px at 48% 20%, rgba(120, 142, 142, 0.35), transparent),
    radial-gradient(160px 30px at 25% 20%, rgba(60, 75, 76, 0.5), transparent),
    linear-gradient(#485c60, #42565a);
}
.task {
  display: flex;
  align-items: center;
  justify-content: center;
  width: 58px;
  height: 38px;
  margin: 0 2px;
}
.start {
  width: 45px;
}
.current {
  border: 1px solid #f0f2f2;
  background: #8f9d9d;
}
.tray {
  display: flex;
  align-items: center;
  gap: 9px;
  margin-left: auto;
  padding: 2px 19px 0 0;
  color: #fff;
  font-size: 12px;
  line-height: 17px;
}
.tray svg:first-child {
  margin-right: 4px;
}
.lang {
  margin: 0 8px 0 7px;
}
.clock {
  font-size: 11px;
  text-align: center;
}
```
